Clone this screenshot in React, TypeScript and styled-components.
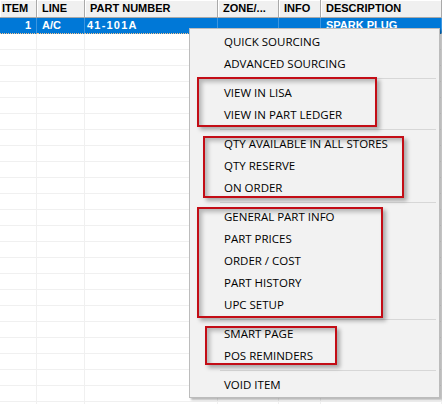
import React from 'react';
import styled, { createGlobalStyle } from 'styled-components';

const GlobalStyle = createGlobalStyle`
  html, body {
    margin: 0;
    padding: 0;
    background: #ffffff;
    overflow: hidden;
  }
`;

type Column = {
  title: string
  width: string
  align?: 'left' | 'right'
  headPad?: number
};

const columns: Column[] = [
  { title: 'ITEM', width: '37px', align: 'right', headPad: 2 },
  { title: 'LINE', width: '48px' },
  { title: 'PART NUMBER', width: '133px' },
  { title: 'ZONE/...', width: '61px' },
  { title: 'INFO', width: '42px' },
  { title: 'DESCRIPTION', width: '1fr' }
];

const selectedRow = ['1', 'A/C', '41-101A', '', '', 'SPARK PLUG'];

type MenuEntry = string | null;

// null marks a separator
const menuEntries: MenuEntry[] = [
  'QUICK SOURCING',
  'ADVANCED SOURCING',
  null,
  'VIEW IN LISA',
  'VIEW IN PART LEDGER',
  null,
  'QTY AVAILABLE IN ALL STORES',
  'QTY RESERVE',
  'ON ORDER',
  null,
  'GENERAL PART INFO',
  'PART PRICES',
  'ORDER / COST',
  'PART HISTORY',
  'UPC SETUP',
  null,
  'SMART PAGE',
  'POS REMINDERS',
  null,
  'VOID ITEM'
];

type Box = { left: number, top: number, width: number, height: number };

const highlights: Box[] = [
  { left: 197, top: 77, width: 180, height: 50 },
  { left: 203, top: 136, width: 201, height: 62 },
  { left: 197, top: 207, width: 186, height: 111 },
  { left: 205, top: 326, width: 132, height: 39 }
];

const EMPTY_ROWS = 24;

const Page = styled.div`
  position: relative;
  width: 442px;
  height: 404px;
  overflow: hidden;
  background: #ffffff;
`;

const Grid = styled.div`
  display: grid;
  grid-template-columns: ${columns.map((c) => c.width).join(' ')};
  font-family: "Liberation Sans", Arial, sans-serif;
  font-weight: bold;
  font-size: 11px;
`;

const HeaderCell = styled.div<{ $pad: number }>`
  height: 17px;
  line-height: 17px;
  padding-left: ${(p) => p.$pad}px;
  background: #f0f0f0;
  color: #000;
  border-right: 1px solid #a9a9a9;
  border-bottom: 1px solid #a9a9a9;
  box-shadow: inset 1px 1px 0 #ffffff;
  white-space: nowrap;
  overflow: hidden;
`;

const Cell = styled.div<{ $selected?: boolean, $align?: string }>`
  height: 15px;
  line-height: 15px;
  padding: 0 5px;
  text-align: ${(p) => p.$align || 'left'};
  white-space: nowrap;
  overflow: hidden;
  background: ${(p) => (p.$selected ? '#0078d7' : '#ffffff')};
  color: ${(p) => (p.$selected ? '#ffffff' : '#000000')};
  border-right: 1px solid ${(p) => (p.$selected ? '#3c96e0' : '#f0f0f0')};
  border-bottom: 1px ${(p) => (p.$selected ? 'dotted #f6c48e' : 'solid #f0f0f0')};
`;

const PartCell = styled(Cell)`
  padding-left: 2px;
  letter-spacing: 1.2px;
`;

const Menu = styled.div`
  position: absolute;
  left: 189px;
  top: 28px;
  width: 249px;
  padding: 2px 0 1px;
  background: #f2f2f2;
  border: 1px solid #bcbcbc;
  box-shadow: 2px 2px 2px rgba(0, 0, 0, 0.28);
  font-family: "Open Sans", "Noto Sans", sans-serif;
  font-size: 11.5px;
  color: #000000;
`;

const MenuItem = styled.div`
  height: 22px;
  line-height: 22px;
  padding-left: 34px;
  white-space: nowrap;
`;

const Separator = styled.div`
  height: 7px;
  display: flex;
  align-items: center;
  padding: 0 3px 0 30px;

  &::after {
    content: '';
    flex: 1;
    height: 1px;
    background: #d7d7d7;
  }
`;

const Highlight = styled.div`
  position: absolute;
  box-sizing: border-box;
  border: 2px solid #c30d16;
  box-shadow: 3px 3px 4px rgba(0, 0, 0, 0.3), inset 3px 3px 4px rgba(0, 0, 0, 0.25);
  pointer-events: none;
`;

const App = () => (
  <Page>
    <GlobalStyle />
    <Grid>
      {columns.map((c) => (
        <HeaderCell key={c.title} $pad={c.headPad ?? 5}>{c.title}</HeaderCell>
      ))}
      {selectedRow.map((value, i) => (i === 2
        ? <PartCell key={i} $selected>{value}</PartCell>
        : <Cell key={i} $selected $align={columns[i].align}>{value}</Cell>
      ))}
      {Array.from({ length: EMPTY_ROWS }).map((_, r) => columns.map((c) => (
        <Cell key={`${r}-${c.title}`} />
      )))}
    </Grid>
    <Menu>
      {menuEntries.map((entry, i) => (entry === null
        ? <Separator key={i} />
        : <MenuItem key={i}>{entry}</MenuItem>
      ))}
    </Menu>
    {highlights.map((b, i) => (
      <Highlight key={i} style={{ left: b.left, top: b.top, width: b.width, height: b.height }} />
    ))}
  </Page>
);

export default App;
